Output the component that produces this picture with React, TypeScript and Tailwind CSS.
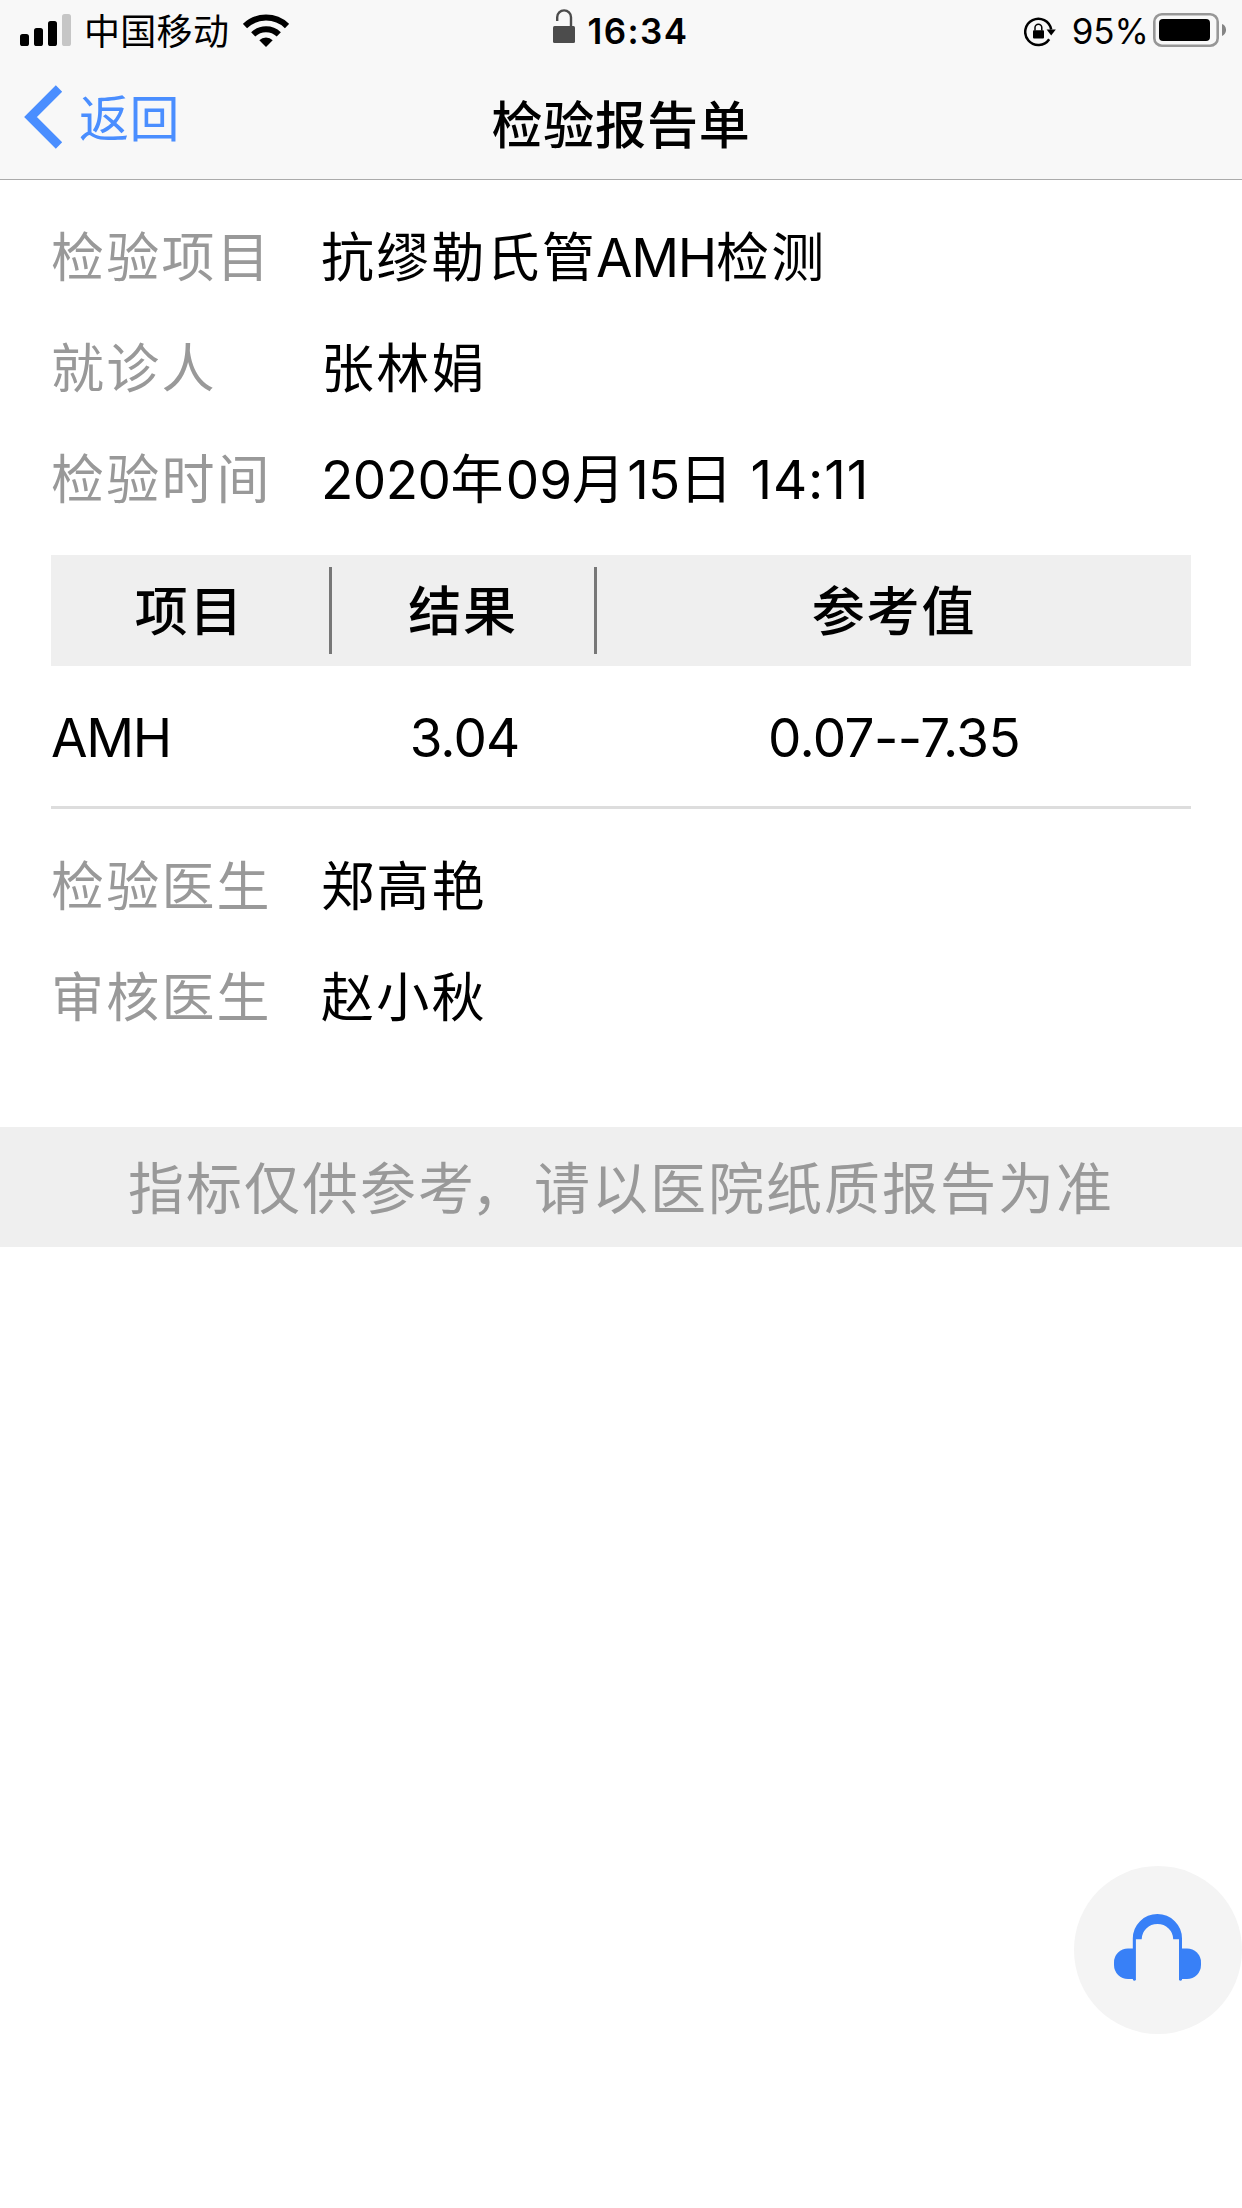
import React from 'react';

/* ─── Icons ─────────────────────────────────────────────────── */

const SignalIcon: React.FC = () => (
    <svg className="w-[51px] h-[32px]" viewBox="0 0 51 32">
        <rect x="0" y="20" width="9" height="12" rx="2.6" fill="#000" />
        <rect x="14" y="14" width="9" height="18" rx="2.6" fill="#000" />
        <rect x="28" y="7" width="9" height="25" rx="2.6" fill="#000" />
        <rect x="42" y="0" width="9" height="32" rx="2.6" fill="#c6c6c6" />
    </svg>
);

const WifiIcon: React.FC = () => (
    <svg className="w-[46px] h-[33px]" viewBox="0 0 46 33">
        <path d="M2 12 A30.5 30.5 0 0 1 44 12" fill="none" stroke="#000" strokeWidth="6" />
        <path d="M10.2 20.4 A18.6 18.6 0 0 1 35.8 20.4" fill="none" stroke="#000" strokeWidth="6" />
        <path d="M16.3 26.3 A9.6 9.6 0 0 1 29.7 26.3 L23 33 Z" fill="#000" />
    </svg>
);

const UnlockIcon: React.FC = () => (
    <svg className="w-[22px] h-[34px]" viewBox="0 0 22 34">
        <path d="M4.2 12 V8.3 A6.9 6.9 0 0 1 18 8.3 V20" fill="none" stroke="#4c4c4c" strokeWidth="2.4" />
        <rect x="0" y="17" width="22" height="17" rx="1.5" fill="#4c4c4c" />
    </svg>
);

const RotationLockIcon: React.FC = () => (
    <svg className="w-[32px] h-[30px]" viewBox="0 0 32 30">
        <path d="M27.2 12.5 A13.1 13.1 0 1 0 25.2 22.2" fill="none" stroke="#000" strokeWidth="2.5" />
        <path d="M22.6 12.5 H31.8 L27.2 18.6 Z" fill="#000" />
        <rect x="9" y="13.2" width="11" height="8.2" rx="1" fill="#000" />
        <path d="M11 13.6 V10.6 A3.4 3.4 0 0 1 17.8 10.6 V13.6" fill="none" stroke="#000" strokeWidth="1.5" />
    </svg>
);

const BatteryIcon: React.FC = () => (
    <svg className="w-[73px] h-[34px]" viewBox="0 0 73 34">
        <rect x="1.3" y="1.3" width="63.4" height="31.4" rx="7.5" fill="none" stroke="#979797" strokeWidth="2.6" />
        <rect x="6" y="6" width="51" height="22" rx="4" fill="#000" />
        <path d="M69 11 C74.4 13 74.4 21 69 23 Z" fill="#858585" />
    </svg>
);

const BackIcon: React.FC = () => (
    <svg className="w-[39px] h-[64px]" viewBox="0 0 39 64">
        <path d="M35 3.5 L6.5 32 L35 60.5" fill="none" stroke="#4a8eff" strokeWidth="9" />
    </svg>
);

const HeadsetIcon: React.FC = () => (
    <svg className="w-[87px] h-[67px]" viewBox="0 0 87 67" fill="#3880f7">
        <path d="M18.8 34.5 V24.5 A24.6 24.5 0 0 1 68 24.5 V66 Q66.5 67.5 65 66 V25.3 H59.2 A15.7 15.3 0 0 0 27.7 25.3 H21.9 V66 Q20.4 67.5 18.9 66 V65 H14 A14 14 0 0 1 0 51 V48.5 A14 14 0 0 1 14 34.5 Z" />
        <path d="M67.5 34.5 H73 A14 14 0 0 1 87 48.5 V51 A14 14 0 0 1 73 65 H67.5 Z" />
    </svg>
);

/* ─── Info Row ──────────────────────────────────────────────── */

const InfoRow: React.FC<{
    label: string;
    children: React.ReactNode;
}> = ({ label, children }) => (
    <div className="flex items-center h-[111px] pt-[3px] text-[53px] tracking-[2.2px] whitespace-nowrap">
        <div className="w-[270px] text-[#999999]">{label}</div>
        <div className="text-black">{children}</div>
    </div>
);

/* ─── Page ──────────────────────────────────────────────────── */

const App: React.FC = () => {
    return (
        <div className="w-[1242px] h-[2208px] bg-white font-['Inter','Noto_Sans_CJK_SC',sans-serif] leading-none text-black relative overflow-hidden">
            <header className="h-[180px] bg-[#f8f8f8] border-b border-[#ababab]">
                {/* Status bar */}
                <div className="grid grid-cols-[1fr_auto_1fr] h-[60px] pl-5 pr-[16px] whitespace-nowrap">
                    <div className="flex items-center">
                        <SignalIcon />
                        <span className="ml-[13px] mt-[4px] text-[36px] tracking-[0.3px]">中国移动</span>
                        <span className="ml-[14px]"><WifiIcon /></span>
                    </div>
                    <div className="flex items-center pr-[5px]">
                        <span className="-mt-[8px]"><UnlockIcon /></span>
                        <span className="ml-[13px] mt-[2px] text-[35px] font-semibold tracking-[1.4px]">16:34</span>
                    </div>
                    <div className="flex items-center justify-end">
                        <span className="mt-[3px]"><RotationLockIcon /></span>
                        <span className="ml-[16px] mt-[2px] text-[35px]">95%</span>
                        <span className="ml-[4px]"><BatteryIcon /></span>
                    </div>
                </div>

                {/* Navigation bar */}
                <div className="grid grid-cols-[1fr_auto_1fr] items-center h-[119px] pl-6 pr-6 whitespace-nowrap">
                    <a className="flex items-center text-[#4a8eff]">
                        <span className="-mt-[6px]"><BackIcon /></span>
                        <span className="ml-[16px] -mt-px text-[50px] tracking-[0.5px]">返回</span>
                    </a>
                    <h1 className="mt-[12px] text-[51px] font-medium tracking-[0.8px]">检验报告单</h1>
                </div>
            </header>

            <main>
                <section className="px-[51px] pt-[21px]">
                    <InfoRow label="检验项目">抗缪勒氏管<span className="-ml-[1px] tracking-[-1.3px]">AMH</span>检测</InfoRow>
                    <InfoRow label="就诊人">张林娟</InfoRow>
                    <InfoRow label="检验时间">
                        <span className="tracking-[-0.5px]">2020</span>年<span className="tracking-[0px]">09</span>月<span className="tracking-[-0.8px]">15</span>日
                        <span className="tracking-[0.9px]"> 14:11</span>
                    </InfoRow>
                </section>

                {/* Results */}
                <section className="mx-[51px] mt-[21px] text-[53px]">
                    <div className="flex items-center h-[111px] bg-[#efefef] font-medium tracking-[1.8px] text-center">
                        <div className="w-[278px] pt-[3px] pr-[1px]">项目</div>
                        <div className="w-[3px] h-[87px] bg-[#777777]" />
                        <div className="w-[262px] pt-[3px]">结果</div>
                        <div className="w-[3px] h-[87px] bg-[#777777]" />
                        <div className="flex-1 pt-[3px]">参考值</div>
                    </div>
                    <div className="flex items-center h-[143px] pt-[4px] border-b-[3px] border-[#dddddd] text-center">
                        <div className="w-[281px] text-left tracking-[-1.4px]">AMH</div>
                        <div className="w-[265px] tracking-[-0.9px]">3.04</div>
                        <div className="flex-1 tracking-[-0.6px]">0.07--7.35</div>
                    </div>
                </section>

                <section className="px-[51px] pt-[21px]">
                    <InfoRow label="检验医生">郑高艳</InfoRow>
                    <InfoRow label="审核医生">赵小秋</InfoRow>
                </section>

                <div className="mt-[75px] h-[120px] pt-[3px] flex items-center justify-center bg-[#efefef] text-[#999999] text-[56px] tracking-[2px] whitespace-nowrap">
                    指标仅供参考<span className="-ml-[5px] mr-[5px]">，</span>请以医院纸质报告为准
                </div>
            </main>

            {/* Floating customer service button */}
            <button className="absolute right-0 top-[1866px] w-[168px] h-[168px] pr-[2px] pb-[5px] rounded-full bg-[#f4f4f4] flex items-center justify-center">
                <HeadsetIcon />
            </button>
        </div>
    );
};

export default App;
